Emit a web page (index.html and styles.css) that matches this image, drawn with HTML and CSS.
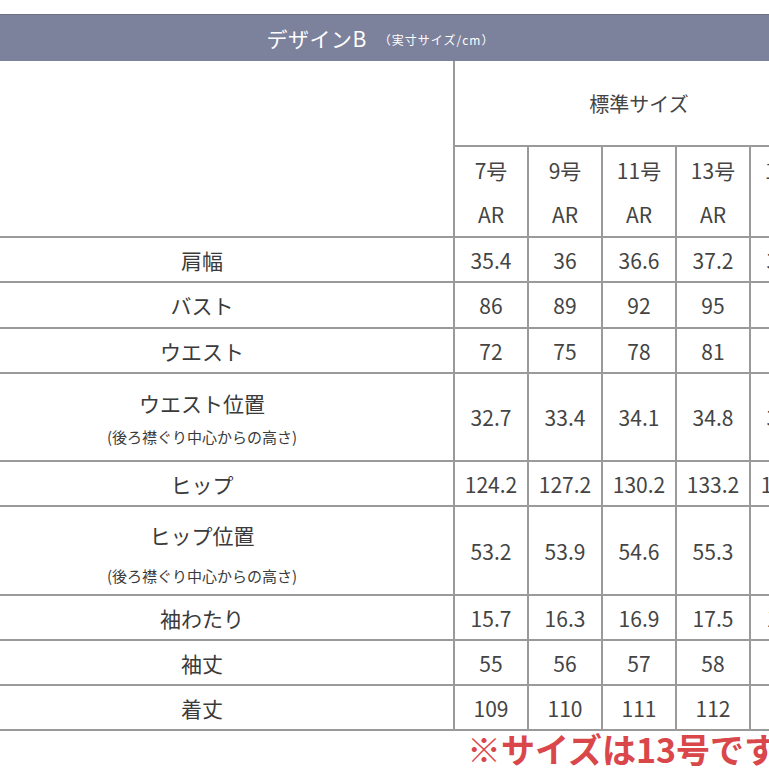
FILE: index.html
```html
<!DOCTYPE html>
<html lang="ja">
<head>
<meta charset="utf-8">
<title>デザインB サイズ表</title>
<link rel="stylesheet" href="styles.css">
</head>
<body>
<div class="page">
  <div class="title-bar">
    <span class="title-main">デザインB</span><span class="title-sub">（実寸サイズ/cm）</span>
  </div>
  <table class="size-table">
    <colgroup>
      <col class="col-label">
      <col class="col-size"><col class="col-size"><col class="col-size"><col class="col-size"><col class="col-size">
    </colgroup>
    <tr class="row-group">
      <td class="corner" rowspan="2"></td>
      <td class="group" colspan="5">標準サイズ</td>
    </tr>
    <tr class="row-sizes">
      <td class="size"><div>7号</div><div>AR</div></td>
      <td class="size"><div>9号</div><div>AR</div></td>
      <td class="size"><div>11号</div><div>AR</div></td>
      <td class="size"><div>13号</div><div>AR</div></td>
      <td class="size"><div>15号</div><div>AR</div></td>
    </tr>
    <tr class="row-s">
      <th>肩幅</th><td>35.4</td><td>36</td><td>36.6</td><td>37.2</td><td>37.8</td>
    </tr>
    <tr class="row-s2">
      <th>バスト</th><td>86</td><td>89</td><td>92</td><td>95</td><td>98</td>
    </tr>
    <tr class="row-s">
      <th>ウエスト</th><td>72</td><td>75</td><td>78</td><td>81</td><td>84</td>
    </tr>
    <tr class="row-l">
      <th class="two waist"><div class="main">ウエスト位置</div><div class="sub">(後ろ襟ぐり中心からの高さ)</div></th>
      <td>32.7</td><td>33.4</td><td>34.1</td><td>34.8</td><td>35.5</td>
    </tr>
    <tr class="row-s">
      <th>ヒップ</th><td>124.2</td><td>127.2</td><td>130.2</td><td>133.2</td><td>136.2</td>
    </tr>
    <tr class="row-l2">
      <th class="two hip"><div class="main">ヒップ位置</div><div class="sub">(後ろ襟ぐり中心からの高さ)</div></th>
      <td>53.2</td><td>53.9</td><td>54.6</td><td>55.3</td><td>56</td>
    </tr>
    <tr class="row-s">
      <th>袖わたり</th><td>15.7</td><td>16.3</td><td>16.9</td><td>17.5</td><td>18.1</td>
    </tr>
    <tr class="row-s">
      <th>袖丈</th><td>55</td><td>56</td><td>57</td><td>58</td><td>59</td>
    </tr>
    <tr class="row-s">
      <th>着丈</th><td>109</td><td>110</td><td>111</td><td>112</td><td>113</td>
    </tr>
  </table>
  <div class="note">※サイズは13号です</div>
</div>
</body>
</html>
```

FILE: styles.css
```css
html, body {
  margin: 0;
  padding: 0;
  background: #ffffff;
  overflow: hidden;
}

body {
  font-family: "Noto Sans CJK JP", "Noto Sans", sans-serif;
  color: #3a3a3a;
}

.page {
  width: 769px;
  height: 769px;
  overflow: hidden;
  padding-top: 14px;
  box-sizing: border-box;
}

.title-bar {
  height: 46px;
  background: #7c819c;
  border-top: 1px solid #70727f;
  color: #ffffff;
  display: flex;
  align-items: center;
  justify-content: center;
  gap: 12px;
}

.title-main {
  font-size: 21px;
  letter-spacing: 0.5px;
  margin-left: -8px;
}

.title-sub {
  font-size: 12px;
  letter-spacing: 1px;
  margin-top: 3px;
}

.size-table {
  border-collapse: collapse;
  table-layout: fixed;
  width: 874px;
  margin-left: -51px;
  font-size: 21px;
}

.col-label { width: 504px; }
.col-size { width: 74px; }

.size-table td,
.size-table th {
  border: 2px solid #9a9a9a;
  padding: 0;
  text-align: center;
  vertical-align: middle;
  font-weight: normal;
  white-space: nowrap;
  overflow: hidden;
}

.size-table td {
  color: #444444;
}

.size-table th {
  color: #3a3a3a;
}

.corner {
  border-top: none !important;
  border-left: none !important;
}

.group {
  border-top: none !important;
  font-size: 20px;
}

.row-group { height: 85px; }
.row-sizes { height: 91px; }

.size div {
  line-height: 44px;
}

.row-s { height: 45px; }
.row-s2 { height: 46px; }
.row-l { height: 88px; }
.row-l2 { height: 89px; }

.two .main {
  line-height: 34px;
}

.two .sub {
  font-size: 15px;
  line-height: 34px;
}

.waist {
  padding-top: 6px !important;
}

.hip {
  padding-top: 10px !important;
}

.hip .sub {
  margin-top: 7px;
}

.note {
  padding-left: 467px;
  margin-top: -3px;
  font-size: 34px;
  font-weight: bold;
  color: #d9474b;
  white-space: nowrap;
  line-height: 42px;
}
```
